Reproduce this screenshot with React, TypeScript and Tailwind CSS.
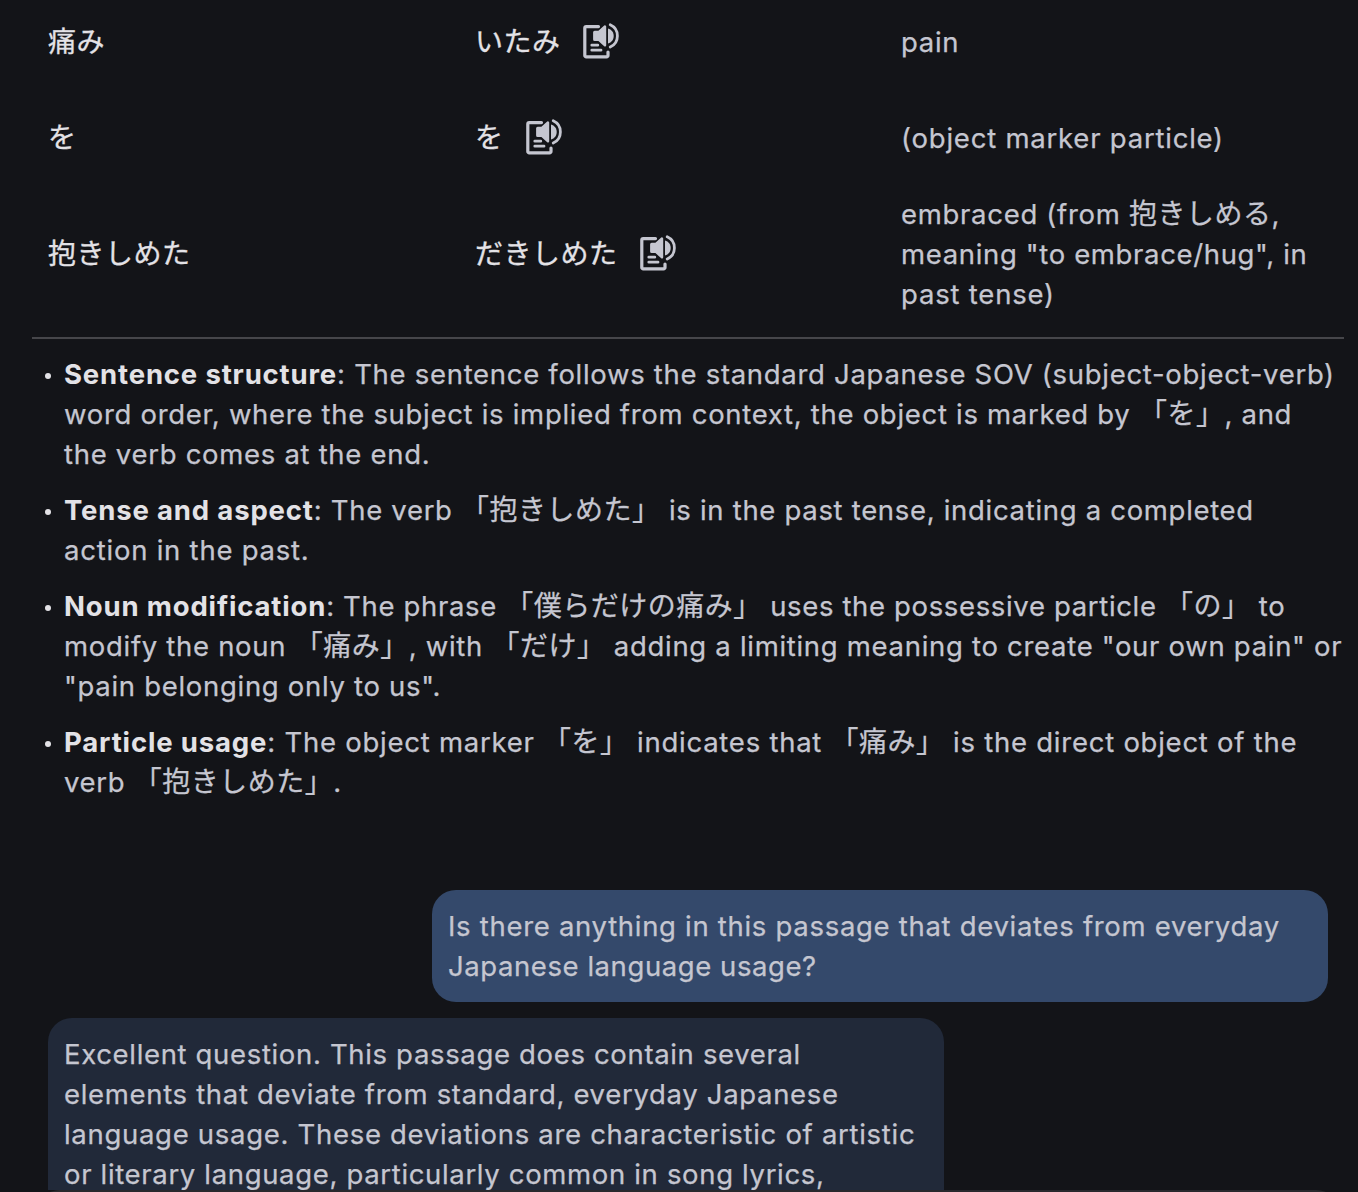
import React from "react";

const CJK = /([\u3000-\u30ff\u4e00-\u9fff]+)/;

function Mixed({ text }: { text: string }) {
  return (
    <>
      {text.split(CJK).map((part, i) =>
        i % 2 === 1 ? (
          <span key={i} lang="ja" className="font-['Noto_Sans_CJK_JP',sans-serif] text-[28px] leading-none tracking-[0.5px]">
            {part}
          </span>
        ) : (
          part
        ),
      )}
    </>
  );
}

function Line({ text, bold, className = "tracking-[0.7px]" }: { text: string; bold?: string; className?: string }) {
  return (
    <span className={`block h-10 whitespace-nowrap [-webkit-text-stroke:0.25px_currentColor] ${className}`}>
      {bold && <strong className="font-bold tracking-[0.84px] text-[#e3e2e6] [-webkit-text-stroke:0px]">{bold}</strong>}
      <Mixed text={text} />
    </span>
  );
}

function SpeakIcon() {
  return (
    <svg width="40" height="40" viewBox="0 0 40 40" fill="none" className="-mt-1 shrink-0" aria-hidden="true">
      <path d="M18.5 6.6H6.2a1.4 1.4 0 0 0-1.4 1.4v27.4a1.4 1.4 0 0 0 1.4 1.4h20.4a1.4 1.4 0 0 0 1.4-1.4v-3.4" stroke="#c5c6d0" strokeWidth="3.2" strokeLinecap="round" />
      <path d="M11.8 25.2h6M11.8 30.2h9.2" stroke="#c5c6d0" strokeWidth="2.8" strokeLinecap="round" />
      <path d="M14.6 10.8h3.8l5.8-5.2a1.2 1.2 0 0 1 2 .9v18.8a1.2 1.2 0 0 1-2 .9l-5.8-5.2h-3.8a1.5 1.5 0 0 1-1.5-1.500v-7.2a1.5 1.5 0 0 1 1.5-1.500z" fill="#c5c6d0" />
      <path d="M28 8.400c3.600 1 5.700 4 5.700 7.500s-2.100 6.500-5.700 7.500z" fill="#c5c6d0" />
      <path d="M30.200 4.800c4.400 2 7.200 6.200 7.200 11.100s-2.800 9.100-7.200 11.100" stroke="#c5c6d0" strokeWidth="2.800" strokeLinecap="round" />
    </svg>
  );
}

function Row({ word, reading, children }: { word: string; reading: string; children: React.ReactNode }) {
  return (
    <div className="grid min-h-24 grid-cols-[427px_426px_1fr] items-center py-2 pl-4">
      <div className="text-[#e3e2e6] [-webkit-text-stroke:0.3px_currentColor]"><Mixed text={word} /></div>
      <div className="flex items-center gap-[19px] text-[#e3e2e6]">
        <div className="[-webkit-text-stroke:0.3px_currentColor]"><Mixed text={reading} /></div>
        <SpeakIcon />
      </div>
      <div>{children}</div>
    </div>
  );
}

function Item({ children }: { children: React.ReactNode }) {
  return (
    <li className="flex">
      <span className="mt-[19px] mr-[13px] ml-[13px] size-1.5 shrink-0 rounded-full bg-[#e3e2e6]" />
      <div>{children}</div>
    </li>
  );
}

export default function App() {
  return (
    <main className="h-[1192px] w-[1358px] overflow-hidden bg-[#131418] font-['Inter','Noto_Sans_CJK_JP',sans-serif] text-[27.5px] leading-10 text-[#c5c6d0]">
      <div className="flex h-[1190px] flex-col overflow-hidden">
        <section className="-mt-1.5 mr-3.5 ml-8 h-[345px] shrink-0 border-b-2 border-[#46464a]">
          <Row word="痛み" reading="いたみ"><Line text="pain" /></Row>
          <Row word="を" reading="を"><Line className="tracking-[0.78px]" text="(object marker particle)" /></Row>
          <Row word="抱きしめた" reading="だきしめた">
            <Line text="embraced (from 抱きしめる," />
            <Line className="tracking-[0.65px]" text={'meaning "to embrace/hug", in'} />
            <Line className="tracking-[0.8px]" text="past tense)" />
          </Row>
        </section>
        <ul className="mt-[15px] ml-8 flex shrink-0 flex-col gap-4">
          <Item>
            <Line bold="Sentence structure" text=": The sentence follows the standard Japanese SOV (subject-object-verb)" />
            <Line text="word order, where the subject is implied from context, the object is marked by 「を」, and" />
            <Line text="the verb comes at the end." />
          </Item>
          <Item>
            <Line className="tracking-[0.69px]" bold="Tense and aspect" text=": The verb 「抱きしめた」 is in the past tense, indicating a completed" />
            <Line className="tracking-[0.77px]" text="action in the past." />
          </Item>
          <Item>
            <Line className="tracking-[0.65px]" bold="Noun modification" text=": The phrase 「僕らだけの痛み」 uses the possessive particle 「の」 to" />
            <Line text={'modify the noun 「痛み」, with 「だけ」 adding a limiting meaning to create "our own pain" or'} />
            <Line text={'"pain belonging only to us".'} />
          </Item>
          <Item>
            <Line className="tracking-[0.75px]" bold="Particle usage" text=": The object marker 「を」 indicates that 「痛み」 is the direct object of the" />
            <Line text="verb 「抱きしめた」." />
          </Item>
        </ul>
        <div className="mt-[88px] mr-[30px] w-[896px] shrink-0 self-end rounded-3xl bg-[#34496b] p-4">
          <Line text="Is there anything in this passage that deviates from everyday" />
          <Line className="tracking-[0.57px]" text="Japanese language usage?" />
        </div>
        <div className="mt-4 ml-12 w-[896px] shrink-0 rounded-t-3xl bg-[#212939] px-4 pt-4">
          <Line className="tracking-[0.66px]" text="Excellent question. This passage does contain several" />
          <Line className="tracking-[0.68px]" text="elements that deviate from standard, everyday Japanese" />
          <Line text="language usage. These deviations are characteristic of artistic" />
          <Line className="tracking-[0.66px]" text="or literary language, particularly common in song lyrics," />
        </div>
      </div>
      <div className="mr-[18px] ml-9 h-12 rounded-3xl bg-[#29292d]" />
    </main>
  );
}
